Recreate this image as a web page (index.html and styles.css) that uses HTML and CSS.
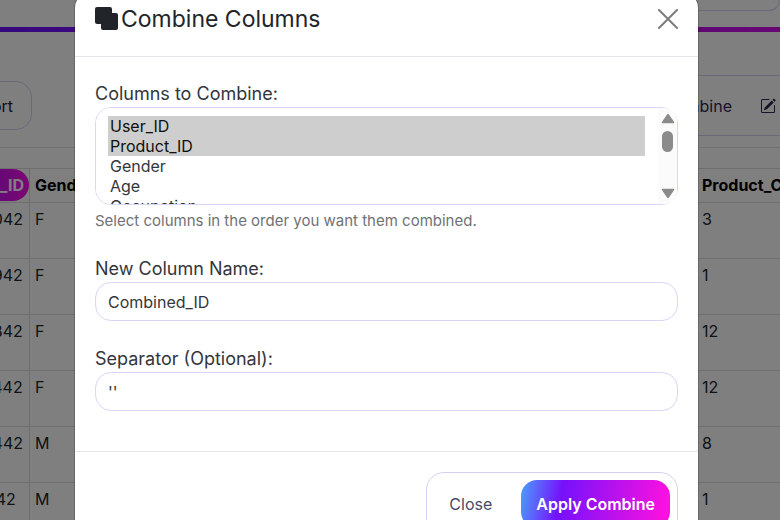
FILE: index.html
```html
<!DOCTYPE html>
<html lang="en">
<head>
<meta charset="utf-8">
<title>Combine Columns</title>
<link rel="stylesheet" href="styles.css">
</head>
<body>
<main class="page">
  <header class="topbar"><div class="topbar-panel"></div></header>
  <div class="rainbow"></div>
  <div class="toolbar">
    <button class="tool-pill" type="button">Export</button>
    <div class="tool-group">
      <button class="tool" type="button">Combine</button>
      <button class="tool" type="button" aria-label="Edit">
        <svg width="16" height="16" viewBox="0 0 16 16" fill="currentColor"><path d="M15.5 1.94a.5.5 0 0 1 0 .7l-1.04 1.05-2-2L13.5.65a.5.5 0 0 1 .7 0l1.3 1.29zm-1.75 2.45-2-2L4.94 9.2a.5.5 0 0 0-.12.2l-.81 2.41a.25.25 0 0 0 .32.32l2.41-.81a.5.5 0 0 0 .2-.12z"/><path d="M1 13.5A1.5 1.5 0 0 0 2.5 15h11a1.5 1.5 0 0 0 1.5-1.5v-6a.5.5 0 0 0-1 0v6a.5.5 0 0 1-.5.5h-11a.5.5 0 0 1-.5-.5v-11a.5.5 0 0 1 .5-.5H9a.5.5 0 0 0 0-1H2.5A1.5 1.5 0 0 0 1 2.5z"/></svg>
      </button>
    </div>
  </div>
  <div class="table-wrap">
    <table class="data">
      <thead><tr><th class="id"><span class="key">User_ID</span></th><th class="gender">Gender</th><th class="gap"></th><th>Product_Category</th></tr></thead>
      <tbody>
        <tr><td class="id">1000042</td><td>F</td><td></td><td>3</td></tr>
        <tr><td class="id">1000942</td><td>F</td><td></td><td>1</td></tr>
        <tr><td class="id">1000842</td><td>F</td><td></td><td>12</td></tr>
        <tr><td class="id">1002442</td><td>F</td><td></td><td>12</td></tr>
        <tr><td class="id">1003442</td><td>M</td><td></td><td>8</td></tr>
        <tr><td class="id">1001142</td><td>M</td><td></td><td>1</td></tr>
      </tbody>
    </table>
  </div>
</main>
<div class="backdrop">
  <form class="modal" role="dialog" aria-labelledby="title">
    <header class="modal-head">
      <svg class="title-icon" width="24" height="24" viewBox="0 0 24 24"><path fill="currentColor" d="M2 0h13a2 2 0 0 1 2 2v4h4a2 2 0 0 1 2 2v13a2 2 0 0 1-2 2H8a2 2 0 0 1-2-2v-4H2a2 2 0 0 1-2-2V2a2 2 0 0 1 2-2z"/></svg>
      <h1 id="title">Combine Columns</h1>
      <button class="close-x" type="button" aria-label="Close dialog">
        <svg width="20" height="20" viewBox="0 0 20 20"><path d="M1 1l18 18M19 1L1 19" fill="none" stroke="currentColor" stroke-width="2" stroke-linecap="round"/></svg>
      </button>
    </header>
    <div class="modal-body">
      <div class="field">
        <label for="cols">Columns to Combine:</label>
        <div class="listbox">
          <select id="cols" multiple size="4">
            <option selected>User_ID</option>
            <option selected>Product_ID</option>
            <option>Gender</option>
            <option>Age</option>
            <option>Occupation</option>
            <option>City_Category</option>
            <option>Stay_In_City</option>
            <option>Marital_Status</option>
            <option>Product_Category_1</option>
            <option>Product_Category_2</option>
            <option>Product_Category_3</option>
            <option>Purchase</option>
          </select>
          <div class="scrollbar" aria-hidden="true">
            <svg width="14" height="11" viewBox="0 0 14 11"><path d="M7 1.500L12.500 9.500H1.500z" fill="currentColor" stroke="currentColor" stroke-width="1.500" stroke-linejoin="round"/></svg>
            <span class="thumb"></span>
            <svg class="down" width="14" height="11" viewBox="0 0 14 11"><path d="M1.500 1.500H12.500L7 9.500z" fill="currentColor" stroke="currentColor" stroke-width="1.500" stroke-linejoin="round"/></svg>
          </div>
        </div>
        <p class="hint">Select columns in the order you want them combined.</p>
      </div>
      <div class="field">
        <label for="name">New Column Name:</label>
        <input id="name" type="text" value="Combined_ID">
      </div>
      <div class="field">
        <label for="sep">Separator (Optional):</label>
        <input id="sep" type="text" value="''">
      </div>
    </div>
    <footer class="modal-foot">
      <div class="actions">
        <button class="btn" type="button">Close</button>
        <button class="btn primary" type="submit">Apply Combine</button>
      </div>
    </footer>
  </form>
</div>
</body>
</html>
```
FILE: styles.css
```css
* { box-sizing: border-box; }
html, body { height: 100%; }
body {
  margin: 0;
  overflow: hidden;
  font-family: Inter, "Liberation Sans", sans-serif;
  font-size: 16px;
  line-height: 24px;
  color: #212529;
  background: #fff;
}
button, input, select { font: inherit; color: inherit; }
button { border: 0; background: none; padding: 0; }

.page { height: 100vh; overflow: hidden; }
.topbar { height: 27px; display: flex; justify-content: flex-end; }
.topbar-panel {
  width: 120px;
  height: 11px;
  border: 1px solid #d6d0f5;
  border-top: 0;
  border-radius: 0 0 16px 16px;
}
.rainbow { height: 5px; background: linear-gradient(90deg, #6a11fb 0%, #7c11fb 12%, #b80fe8 85%, #d00fe8 100%); }
.toolbar {
  height: 116px;
  padding-top: 32px;
  display: flex;
  align-items: center;
  justify-content: space-between;
  border-bottom: 1px solid #dee2e6;
}
.tool-pill {
  width: 92px;
  height: 49px;
  margin-left: -60px;
  padding-right: 18px;
  text-align: right;
  border: 1px solid #d6d0f5;
  border-radius: 16px;
}
.tool-group {
  display: flex;
  align-items: center;
  gap: 28px;
  height: 61px;
  width: 180px;
  margin-right: -40px;
  padding-right: 43px;
  justify-content: flex-end;
  border: 1px solid #d6d0f5;
  border-radius: 16px;
}
.tool { color: #2a2a55; display: flex; }

.table-wrap { margin: 20px 0 0 -61px; }
.data { width: 100%; min-width: 900px; table-layout: fixed; border-collapse: collapse; border-top: 1px solid #cfd0d4; }
.data th, .data td {
  padding: 4px 5px;
  text-align: left;
  vertical-align: top;
  border: 1px solid #dcdcdc;
  font-weight: 400;
}
.data th { height: 34px; font-weight: 700; color: #000; }
.data td { height: 56px; }
.data .id { width: 90px; padding-left: 16px; padding-right: 0; }
.data th.id { padding: 0; text-align: right; }
.data .gender { width: 90px; }
.data .gap { width: 577px; }
.key {
  display: block;
  padding: 4px 5px;
  color: #fff;
  border-radius: 16px;
  background: linear-gradient(90deg, #7c11fb, #f70fe8);
}

.backdrop {
  position: absolute;
  inset: 0;
  overflow: hidden;
  background: rgba(0, 0, 0, .5);
  padding: 0 82px 0 75px;
}
.modal { margin-top: -8px; background: #fff; border-radius: 16px; box-shadow: 0 0 0 1px rgba(0, 0, 0, .18); }
.modal-head {
  display: flex;
  align-items: center;
  gap: 2px;
  padding: 12px 20px 22px;
  border-bottom: 1px solid #e4e5ef;
}
.modal-head h1 { margin: 0; font-size: 23px; line-height: 30px; font-weight: 400; }
.close-x { margin-left: auto; display: flex; color: #7c7c7c; }
.modal-body { padding: 24px 20px 40px; display: grid; gap: 25px; border-bottom: 1px solid #e4e5ef; }
.field { display: grid; color: #33363b; }
.field label { font-size: 18px; line-height: 26px; }
.field input, .field select {
  display: block;
  width: 100%;
  border: 1px solid #dad6f5;
  border-radius: 16px;
  background: #fff;
  outline: 0;
}
.field input { height: 39px; padding: 0 12px; }
.field select { height: 98px; padding: 8px 32px 7px 12px; overflow-y: scroll; scrollbar-width: none; }
.field option { min-height: 20px; line-height: 20px; padding: 0 2px; }
.listbox { position: relative; }
.scrollbar {
  position: absolute;
  inset: 1px 1px 1px auto;
  width: 19px;
  padding: 5px 0;
  display: flex;
  flex-direction: column;
  align-items: center;
  gap: 7px;
  color: #8b8b8b;
  background: #fbfbfb;
  border-radius: 0 12px 12px 0;
}
.thumb { width: 11px; height: 21px; border-radius: 6px; background: #8b8b8b; }
.down { margin-top: auto; }
.hint { margin: 6px 0 0; font-size: 15px; line-height: 20px; color: #6f7275; }
.modal-foot { display: flex; justify-content: flex-end; padding: 20px; }
.actions { display: flex; gap: 14px; padding: 7px; border: 1px solid #d6d0ee; border-radius: 18px; }
.btn { height: 48px; padding: 0 15px; border-radius: 16px; color: #4a4a68; }
.btn.primary {
  color: #fff;
  font-weight: 600;
  background: linear-gradient(100deg, #4b9ffb 0%, #7511fb 27%, #fb11e0 95%);
}
```
